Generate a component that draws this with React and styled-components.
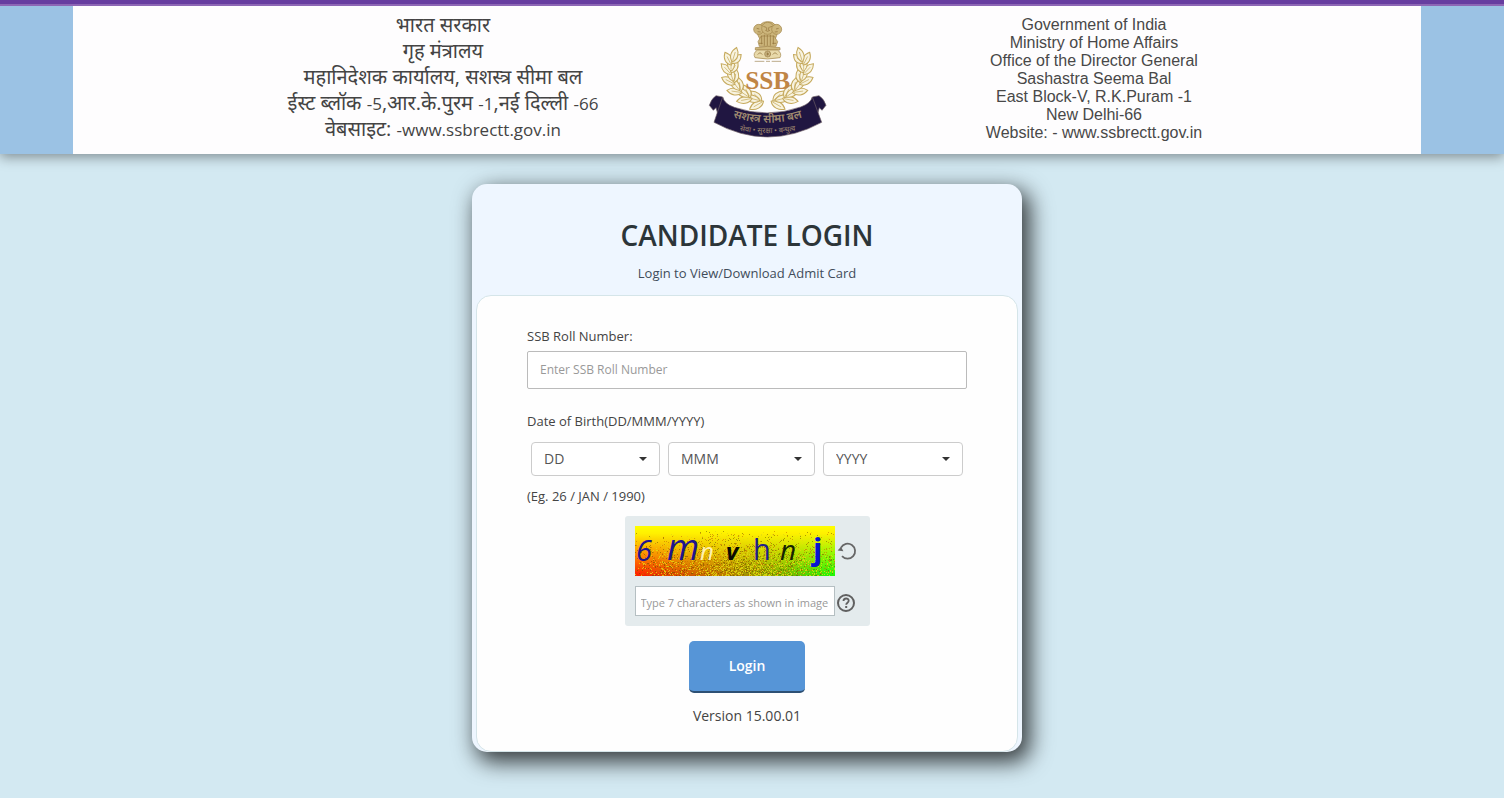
import { useState } from "react";
import styled, { createGlobalStyle } from "styled-components";

const GlobalStyle = createGlobalStyle`
  * {
    box-sizing: border-box;
  }

  body {
    margin: 0;
    background-color: #d3e9f2;
    color: #444;
    font-family: "Open Sans", sans-serif;
    font-size: 13px;
    line-height: 20px;
  }
`;

const Header = styled.header`
  border-top: 4px solid #673da0;
  background-color: #9bc2e4;
  padding: 0 83px 0 73px;
  box-shadow: 0 3px 12px rgba(0, 0, 0, 0.4);
  position: relative;

  &::before {
    content: "";
    position: absolute;
    top: 0;
    left: 0;
    right: 0;
    height: 2px;
    background-color: #8d66b5;
  }
`;

const Banner = styled.div`
  display: grid;
  grid-template-columns: 502fr 146px 508fr;
  justify-items: center;
  height: 150px;
  padding: 2px 73px 0 119px;
  background-color: #fefdfe;
`;

const HindiAddress = styled.address`
  padding-top: 6px;
  color: #444;
  font-family: "Open Sans", "Noto Sans Devanagari", "Noto Sans", sans-serif;
  font-size: 20px;
  font-style: normal;
  line-height: 26px;
  text-align: center;
  white-space: nowrap;
`;

const Latin = styled.span`
  font-size: 17px;
  line-height: 20px;
`;

const EnglishAddress = styled.address`
  padding-top: 10px;
  color: #484848;
  font-family: "Liberation Sans", Arial, sans-serif;
  font-size: 16px;
  font-style: normal;
  line-height: 18px;
  text-align: center;
  white-space: nowrap;
`;

const EmblemSvg = styled.svg`
  width: 135px;
  height: 135px;
  margin-top: 4px;
`;

const Main = styled.main`
  display: flex;
  justify-content: center;
  padding: 30px 10px 46px 0;
`;

const Card = styled.section`
  width: 550px;
  padding: 0 4px;
  border-radius: 15px;
  background-color: #eef6ff;
  box-shadow: 6px 8px 22px 2px rgba(0, 0, 0, 0.75);
`;

const CardHeader = styled.div`
  padding: 31px 0 12px;
  text-align: center;
  color: #414c5a;
`;

const Title = styled.h1`
  margin: 0 0 8px;
  color: #2c3539;
  font-size: 28px;
  font-weight: 600;
  line-height: 40px;
`;

const Subtitle = styled.p`
  margin: 0;
`;

const LoginForm = styled.form`
  display: flex;
  flex-direction: column;
  padding: 30px 50px 25px;
  border: 1px solid #d5e5e9;
  border-radius: 15px;
  background-color: #fefefe;
`;

const Label = styled.label`
  margin-bottom: 5px;
`;

const RollInput = styled.input`
  height: 38px;
  margin-bottom: 22px;
  padding: 0 12px 2px;
  border: 1px solid #bbb;
  border-radius: 2px;
  background-color: #fff;
  color: #333;
  font-family: inherit;
  font-size: 12px;

  &::placeholder {
    color: #999;
  }
`;

const DateGroup = styled.fieldset`
  min-width: 0;
  margin: 0;
  padding: 0;
  border: none;
`;

const DateLegend = styled.legend`
  padding: 0;
`;

const DateRow = styled.div`
  display: grid;
  grid-template-columns: 129fr 147fr 140fr;
  gap: 8px;
  padding: 11px 4px 10px;
`;

const SelectWrap = styled.div`
  position: relative;

  &::after {
    content: "";
    position: absolute;
    top: 15px;
    right: 13px;
    border: 4px solid transparent;
    border-top-color: #333;
    border-bottom: none;
    pointer-events: none;
  }
`;

const Select = styled.select`
  appearance: none;
  width: 100%;
  height: 34px;
  padding: 0 12px 2px;
  border: 1px solid #ccc;
  border-radius: 4px;
  background-color: #fff;
  color: #555;
  font-family: inherit;
  font-size: 14px;
`;

const Hint = styled.p`
  margin: 0 0 10px;
`;

const CaptchaBox = styled.div`
  display: grid;
  grid-template-columns: 200px 22px;
  gap: 10px 2px;
  align-items: center;
  align-self: center;
  padding: 10px 11px 10px 10px;
  border-radius: 3px;
  background-color: #e4ebed;
`;

const CaptchaImage = styled.svg`
  display: block;
  width: 200px;
  height: 50px;
  overflow: visible;
`;

const CaptchaInput = styled.input`
  width: 200px;
  height: 30px;
  padding: 2px 5px 0;
  border: 1px solid #b5bfc2;
  background-color: #fff;
  font-family: inherit;
  font-size: 11px;

  &::placeholder {
    color: #999;
  }
`;

const IconButton = styled.button`
  width: 20px;
  height: 22px;
  padding: 0;
  border: none;
  background: none;
  cursor: pointer;

  svg {
    display: block;
  }
`;

const LoginBtn = styled.button`
  align-self: center;
  width: 116px;
  height: 52px;
  margin: 15px 0 13px;
  padding: 0 0 2px;
  border: none;
  border-bottom: 2px solid #2d5074;
  border-radius: 5px;
  background-color: #5695d7;
  color: #fff;
  font-family: inherit;
  font-size: 14px;
  font-weight: 600;
  cursor: pointer;

  &:hover {
    background-color: #4685c7;
  }
`;

const Version = styled.p`
  margin: 0;
  font-size: 14px;
  text-align: center;
`;

const months = ["JAN", "FEB", "MAR", "APR", "MAY", "JUN", "JUL", "AUG", "SEP", "OCT", "NOV", "DEC"];
const days = Array.from({ length: 31 }, (_, i) => String(i + 1).padStart(2, "0"));
const years = Array.from({ length: 50 }, (_, i) => String(1960 + i));

// angle from the bottom of the wreath, leaf length, tilt against the stem
const leaves = [];
[6, 25, 44, 63, 82, 99].forEach((angle, i) => {
  leaves.push({ angle, size: 48 - i, tilt: -36 });
  leaves.push({ angle: angle + 3, size: 44 - i, tilt: 34 });
  leaves.push({ angle: angle + 6, size: 50 - i, tilt: 2 });
});

const Branch = () => (
  <g fill="#f8f3df" stroke="#c5a95c" strokeWidth="3">
    {leaves.map(({ angle, size, tilt }) => {
      const rad = (angle * Math.PI) / 180;
      const x = 202 - 109 * Math.sin(rad);
      const y = 180 + 94 * Math.cos(rad);
      return (
        <g
          key={`${angle}${tilt}`}
          transform={`translate(${x.toFixed(1)} ${y.toFixed(1)}) rotate(${angle - 90 + tilt})`}
        >
          <path d={`M0 0 C-15 -12 -13 -${size - 14} 0 -${size} C13 -${size - 14} 15 -12 0 0Z`} />
          <path d={`M0 -4 V-${size - 14}`} strokeWidth="2" />
        </g>
      );
    })}
  </g>
);

const Emblem = () => (
  <EmblemSvg viewBox="0 0 405 405" role="img" aria-label="SSB emblem">
    <Branch />
    <g transform="translate(404 0) scale(-1 1)">
      <Branch />
    </g>
    <g fill="#cdb67c" stroke="#a08348" strokeWidth="2">
      <path d="M178 47 Q190 33 203 35 Q217 33 228 47 L236 55 L231 74 L223 94 H183 L173 74 L168 55Z" />
      <circle cx="176" cy="58" r="15" />
      <circle cx="203" cy="55" r="18" />
      <circle cx="230" cy="58" r="15" />
      <path d="M184 78 L174 95 L178 109 H228 L233 95 L222 78Z" />
      <path d="M166 113 Q203 105 240 113 V120 H166Z" />
      <path d="M173 120 Q157 129 165 143 Q202 151 240 143 Q247 129 232 120Z" fill="#e8d9aa" />
    </g>
    <g fill="none" stroke="#8f7038" strokeWidth="2">
      <path d="M190 49 l8 3 M208 52 l8 -3 M196 61 q7 6 14 0 M200 52 v9 M206 52 v9 M170 55 l8 2 M236 55 l-8 2 M173 65 l9 1 M233 65 l-9 1" />
      <path d="M185 77 v26 M193 74 v33 M202 75 v32 M211 74 v33 M220 77 v26 M177 100 h11 M217 100 h11" />
      <circle cx="203" cy="132" r="9" />
      <path d="M203 124 v16 M195 132 h16 M197 126 l12 12 M209 126 l-12 12 M173 134 q7 -11 14 0 M218 134 q7 -11 14 0" />
      <path d="M164 154 H193 M198 154 H210 M215 154 H243" stroke="#9c8351" />
    </g>
    <text
      x="203"
      y="237"
      textAnchor="middle"
      fill="#c08545"
      fontFamily="Liberation Serif"
      fontSize="76"
      fontWeight="700"
    >
      SSB
    </text>
    <g fill="#201641" stroke="#6f6066" strokeWidth="2">
      <path d="M68 261 L48 257 Q34 266 28 286 L40 301 L48 293 L54 315 L72 296Z" />
      <path d="M337 261 L357 257 Q372 266 378 286 L366 301 L358 293 L352 315 L334 296Z" />
      <path d="M68 261 Q73 282 103 292 Q202 326 302 291 Q332 280 337 261 L365 337 Q203 425 42 337Z" />
    </g>
    <path id="motto-top" d="M74 314 Q203 362 332 314" fill="none" />
    <path id="motto-bottom" d="M72 352 Q203 386 334 352" fill="none" />
    <g fill="#a08b70" fontFamily="Noto Sans Devanagari, Noto Sans, sans-serif" textAnchor="middle">
      <text fontSize="34" fontWeight="600">
        <textPath href="#motto-top" startOffset="50%">सशस्त्र सीमा बल</textPath>
      </text>
      <text fontSize="22">
        <textPath href="#motto-bottom" startOffset="50%">सेवा • सुरक्षा • बन्धुत्व</textPath>
      </text>
    </g>
  </EmblemSvg>
);

// small deterministic generator, so the speckles stay put between renders
const makeSpeckles = () => {
  let seed = 17;
  const next = () => {
    seed = (seed * 16807) % 2147483647;
    return seed / 2147483647;
  };
  const paths = { dark: "", warm: "", light: "" };
  for (let i = 0; i < 7500; i++) {
    const x = Math.floor(next() * 200);
    const y = Math.floor(next() * 50);
    const kind = next();
    const centre = 1 - Math.abs(x - 105) / 140;
    if (next() > ((y - 4) / 46) * centre * 1.3) continue;
    const name = kind < 0.3 ? "dark" : kind < 0.6 ? "warm" : "light";
    paths[name] += `M${x} ${y}h1v1h-1z`;
  }
  return paths;
};

const speckles = makeSpeckles();

const Captcha = () => (
  <CaptchaImage viewBox="0 0 200 50" role="img" aria-label="Security characters">
    <defs>
      <linearGradient id="base">
        <stop offset="0" stopColor="#ff1800" />
        <stop offset="0.45" stopColor="#b77a00" />
        <stop offset="0.75" stopColor="#72b800" />
        <stop offset="1" stopColor="#18fa08" />
      </linearGradient>
      <linearGradient id="fade" x2="0" y2="1">
        <stop offset="0" stopColor="#ff0" />
        <stop offset="0.15" stopColor="#fff000" />
        <stop offset="1" stopColor="#ff0" stopOpacity="0" />
      </linearGradient>
    </defs>
    <rect width="200" height="50" fill="url(#base)" />
    <rect width="200" height="50" fill="url(#fade)" />
    <path d={speckles.dark} fill="#604800" opacity="0.5" />
    <path d={speckles.warm} fill="#c97000" opacity="0.6" />
    <path d={speckles.light} fill="#e4dc10" opacity="0.8" />
    <g fontFamily="Open Sans" fill="#20148d">
      <text x="1" y="35" fontSize="29" fontStyle="italic">6</text>
      <text x="32" y="34" fontSize="37" fontStyle="italic">m</text>
      <text x="65" y="34" fontSize="24" fontStyle="italic" fill="#fff0b0">n</text>
      <text x="91" y="34" fontSize="24" fontStyle="italic" fontWeight="700" fill="#0b0b00">v</text>
      <text x="118" y="34" fontSize="29" fill="#20208a">h</text>
      <text x="145" y="34" fontSize="28" fontStyle="italic" fill="#142500">n</text>
      <text x="178" y="34" fontSize="31" fontWeight="700" fill="#0714d2">j</text>
    </g>
  </CaptchaImage>
);

const RefreshIcon = () => (
  <svg width="20" height="22" viewBox="0 0 20 22" aria-hidden="true">
    <path d="M4 7.6 A7.5 7.5 0 1 1 5 16.2" fill="none" stroke="#666" strokeWidth="1.8" />
    <path d="M0.6 10.6 L4 6.8 L6.4 11.2Z" fill="#666" />
  </svg>
);

const HelpIcon = () => (
  <svg width="20" height="22" viewBox="0 0 20 22" aria-hidden="true">
    <circle cx="9" cy="13" r="8" fill="none" stroke="#606060" strokeWidth="2" />
    <path d="M6.5 11 C6.5 7.7 11.7 7.7 11.7 10.8 C11.7 12.8 9.2 12.6 9.2 14.8" fill="none" stroke="#606060" strokeWidth="1.8" />
    <path d="M8.2 16h2v2h-2z" fill="#606060" />
  </svg>
);

const DateSelect = ({ placeholder, label, options, value, onChange }) => (
  <SelectWrap>
    <Select aria-label={label} value={value} onChange={(e) => onChange(e.target.value)}>
      <option value="">{placeholder}</option>
      {options.map((option) => (
        <option key={option} value={option}>
          {option}
        </option>
      ))}
    </Select>
  </SelectWrap>
);

const App = () => {
  const [roll, setRoll] = useState("");
  const [day, setDay] = useState("");
  const [month, setMonth] = useState("");
  const [year, setYear] = useState("");
  const [code, setCode] = useState("");

  return (
    <>
      <GlobalStyle />
      <Header>
        <Banner>
          <HindiAddress lang="hi">
            भारत सरकार
            <br />
            गृह मंत्रालय
            <br />
            महानिदेशक कार्यालय, सशस्त्र सीमा बल
            <br />
            ईस्ट ब्लॉक <Latin>-5</Latin>,आर.के.पुरम <Latin>-1</Latin>,नई दिल्ली <Latin>-66</Latin>
            <br />
            वेबसाइट: <Latin>-www.ssbrectt.gov.in</Latin>
          </HindiAddress>
          <Emblem />
          <EnglishAddress>
            Government of India
            <br />
            Ministry of Home Affairs
            <br />
            Office of the Director General
            <br />
            Sashastra Seema Bal
            <br />
            East Block-V, R.K.Puram -1
            <br />
            New Delhi-66
            <br />
            Website: - www.ssbrectt.gov.in
          </EnglishAddress>
        </Banner>
      </Header>

      <Main>
        <Card>
          <CardHeader>
            <Title>CANDIDATE LOGIN</Title>
            <Subtitle>Login to View/Download Admit Card</Subtitle>
          </CardHeader>

          <LoginForm onSubmit={(e) => e.preventDefault()}>
            <Label htmlFor="roll">SSB Roll Number:</Label>
            <RollInput
              id="roll"
              type="text"
              placeholder="Enter SSB Roll Number"
              value={roll}
              onChange={(e) => setRoll(e.target.value)}
            />

            <DateGroup>
              <DateLegend>Date of Birth(DD/MMM/YYYY)</DateLegend>
              <DateRow>
                <DateSelect label="Day" placeholder="DD" options={days} value={day} onChange={setDay} />
                <DateSelect label="Month" placeholder="MMM" options={months} value={month} onChange={setMonth} />
                <DateSelect label="Year" placeholder="YYYY" options={years} value={year} onChange={setYear} />
              </DateRow>
            </DateGroup>
            <Hint>(Eg. 26 / JAN / 1990)</Hint>

            <CaptchaBox>
              <Captcha />
              <IconButton type="button" aria-label="New image">
                <RefreshIcon />
              </IconButton>
              <CaptchaInput
                type="text"
                aria-label="Characters in image"
                placeholder="Type 7 characters as shown in image"
                value={code}
                onChange={(e) => setCode(e.target.value)}
              />
              <IconButton type="button" aria-label="Help">
                <HelpIcon />
              </IconButton>
            </CaptchaBox>

            <LoginBtn type="submit">Login</LoginBtn>
            <Version>Version 15.00.01</Version>
          </LoginForm>
        </Card>
      </Main>
    </>
  );
};

export default App;
